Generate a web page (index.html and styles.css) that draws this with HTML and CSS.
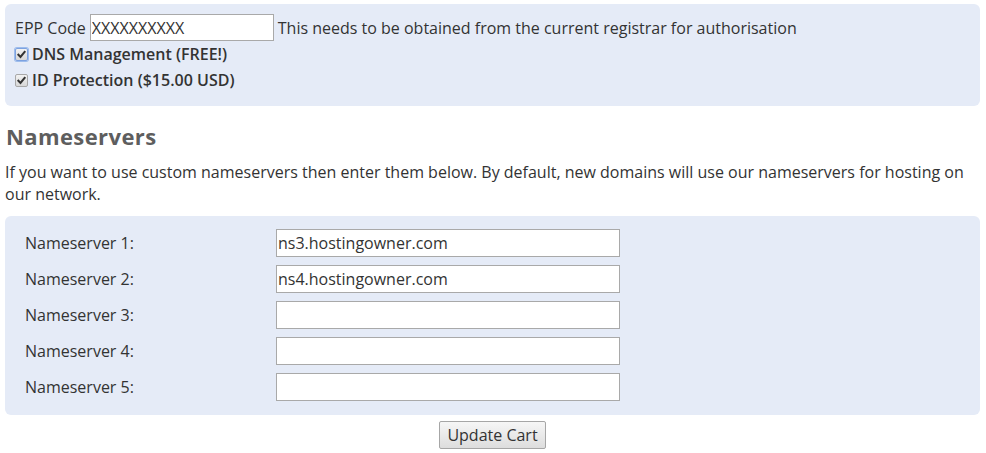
FILE: index.html
```html
<!DOCTYPE html>
<html lang="en">
<head>
<meta charset="utf-8">
<title>Domain Configuration</title>
<link rel="stylesheet" href="styles.css">
</head>
<body>
<div class="page">
  <div class="panel panel-addons">
    <div class="row epp">
      <label class="lbl" for="epp">EPP Code</label>
      <input class="field field-epp" id="epp" type="text" value="XXXXXXXXXX">
      <span class="hint">This needs to be obtained from the current registrar for authorisation</span>
    </div>
    <label class="row check">
      <span class="cb focused"><svg viewBox="0 0 12 12" width="11" height="11"><path d="M2.6 6.2 L4.9 8.6 L9.4 3.2" fill="none" stroke="#333333" stroke-width="2.2" stroke-linecap="square"/></svg></span>
      <strong>DNS Management (FREE!)</strong>
    </label>
    <label class="row check">
      <span class="cb"><svg viewBox="0 0 12 12" width="11" height="11"><path d="M2.6 6.2 L4.9 8.6 L9.4 3.2" fill="none" stroke="#333333" stroke-width="2.2" stroke-linecap="square"/></svg></span>
      <strong>ID Protection ($15.00 USD)</strong>
    </label>
  </div>

  <h2 class="title">Nameservers</h2>
  <p class="intro">If you want to use custom nameservers then enter them below. By default, new domains will use our nameservers for hosting on our network.</p>

  <div class="panel panel-ns">
    <div class="ns-grid">
      <label class="ns-label" for="ns1">Nameserver 1:</label>
      <input class="field field-ns" id="ns1" type="text" value="ns3.hostingowner.com">
      <label class="ns-label" for="ns2">Nameserver 2:</label>
      <input class="field field-ns" id="ns2" type="text" value="ns4.hostingowner.com">
      <label class="ns-label" for="ns3">Nameserver 3:</label>
      <input class="field field-ns" id="ns3" type="text" value="">
      <label class="ns-label" for="ns4">Nameserver 4:</label>
      <input class="field field-ns" id="ns4" type="text" value="">
      <label class="ns-label" for="ns5">Nameserver 5:</label>
      <input class="field field-ns" id="ns5" type="text" value="">
    </div>
  </div>

  <div class="actions">
    <button class="btn" type="button">Update Cart</button>
  </div>
</div>
</body>
</html>
```

FILE: styles.css
```css
* { box-sizing: border-box; }

html, body {
  margin: 0;
  padding: 0;
  background: #ffffff;
}

body {
  font-family: "Open Sans", "DejaVu Sans", sans-serif;
  font-size: 16px;
  color: #333333;
  line-height: 22px;
}

.page {
  padding: 4px 6px 0 5px;
}

.panel {
  background: #e5ebf7;
  border-radius: 6px;
}

.panel-addons {
  padding: 10px 10px 13px 10px;
  display: flex;
  flex-direction: column;
}

.row {
  display: flex;
  align-items: center;
}

.epp {
  height: 27px;
  gap: 4px;
}

.lbl { white-space: nowrap; }

.field {
  font-family: "Open Sans", "DejaVu Sans", sans-serif;
  font-size: 16px;
  color: #333333;
  background: #ffffff;
  border: 1px solid #a9a9a9;
  border-radius: 0;
  padding: 0 1px;
  margin: 0;
  outline: none;
}

.field-epp {
  width: 184px;
  height: 27px;
}

.hint {
  white-space: nowrap;
  margin-left: 0;
}

.check {
  height: 26px;
  gap: 4px;
  cursor: pointer;
}

.check strong {
  font-weight: 600;
}

.cb {
  width: 13px;
  height: 13px;
  border: 1px solid #a8a8a8;
  border-radius: 2px;
  background: linear-gradient(#f2f2f2, #d8d8d8);
  display: flex;
  align-items: center;
  justify-content: center;
  flex: none;
}

.cb.focused {
  box-shadow: 0 0 0 1px #9dbcec;
  border-color: #7da2e0;
}

.title {
  margin: 18px 0 0 1px;
  font-family: "Open Sans", "DejaVu Sans", sans-serif;
  font-weight: 700;
  font-size: 22px;
  line-height: 24px;
  color: #5e5e5e;
  letter-spacing: 0.4px;
}

.intro {
  margin: 13px 0 11px 0;
}

.panel-ns {
  padding: 13px 20px 14px 20px;
}

.ns-grid {
  display: grid;
  grid-template-columns: 251px 344px;
  row-gap: 8px;
  align-items: center;
}

.ns-label {
  white-space: nowrap;
}

.field-ns {
  width: 344px;
  height: 28px;
}

.actions {
  display: flex;
  justify-content: center;
  margin-top: 6px;
}

.btn {
  font-family: "Open Sans", "DejaVu Sans", sans-serif;
  font-size: 16px;
  color: #333333;
  height: 28px;
  padding: 0 7px;
  border: 1px solid #a6a6a6;
  border-radius: 2px;
  background: linear-gradient(#f6f6f6, #dddddd);
  cursor: pointer;
}
```
